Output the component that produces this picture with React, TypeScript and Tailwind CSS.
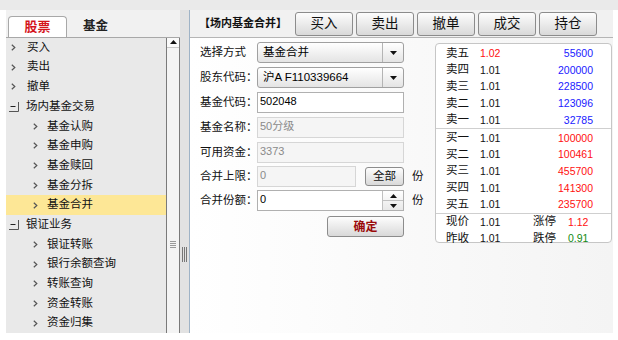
import React from 'react';

type Node = { label: string; kind: 'top' | 'group' | 'child'; active?: boolean };

const tree: Node[] = [
  { label: '买入', kind: 'top' },
  { label: '卖出', kind: 'top' },
  { label: '撤单', kind: 'top' },
  { label: '场内基金交易', kind: 'group' },
  { label: '基金认购', kind: 'child' },
  { label: '基金申购', kind: 'child' },
  { label: '基金赎回', kind: 'child' },
  { label: '基金分拆', kind: 'child' },
  { label: '基金合并', kind: 'child', active: true },
  { label: '银证业务', kind: 'group' },
  { label: '银证转账', kind: 'child' },
  { label: '银行余额查询', kind: 'child' },
  { label: '转账查询', kind: 'child' },
  { label: '资金转账', kind: 'child' },
  { label: '资金归集', kind: 'child' },
];

const sells = [
  { label: '卖五', price: '1.02', up: true, vol: '55600' },
  { label: '卖四', price: '1.01', vol: '200000' },
  { label: '卖三', price: '1.01', vol: '228500' },
  { label: '卖二', price: '1.01', vol: '123096' },
  { label: '卖一', price: '1.01', vol: '32785' },
];

const buys = [
  { label: '买一', price: '1.01', vol: '100000' },
  { label: '买二', price: '1.01', vol: '100461' },
  { label: '买三', price: '1.01', vol: '455700' },
  { label: '买四', price: '1.01', vol: '141300' },
  { label: '买五', price: '1.01', vol: '235700' },
];

const Chevron = () => (
  <svg width="5" height="7" viewBox="0 0 5 7" className="shrink-0">
    <path d="M0.8 0.8 L3.8 3.5 L0.8 6.2" fill="none" stroke="#555" strokeWidth="1.2" />
  </svg>
);

const MinusBox = () => (
  <svg width="10" height="10" viewBox="0 0 10 10" className="shrink-0">
    <path d="M9.5 0 V9.5 H0" fill="none" stroke="#555" strokeWidth="1" />
    <path d="M1.5 4.5 H6.5" stroke="#222" strokeWidth="1" />
  </svg>
);

const Down = () => (
  <svg width="7" height="4" viewBox="0 0 7 4">
    <path d="M0 0 H7 L3.5 4 Z" fill="#111" />
  </svg>
);

const Up = () => (
  <svg width="7" height="4" viewBox="0 0 7 4">
    <path d="M0 4 H7 L3.5 0 Z" fill="#111" />
  </svg>
);

const Label = ({ children }: { children: React.ReactNode }) => (
  <div className="w-[57px] shrink-0 whitespace-nowrap text-[11.5px] leading-none text-[#111]">{children}</div>
);

const Select = ({ value }: { value: string }) => (
  <div className="flex h-[21px] w-[147px] shrink-0 rounded-[3px] border border-[#a0a0a0] bg-linear-to-b from-white to-[#e4e4e4]">
    <div className="flex flex-1 items-center pl-[5px] text-[11.5px] text-black">{value}</div>
    <div className="flex w-[21px] items-center justify-center border-l border-[#b4b4b4]">
      <Down />
    </div>
  </div>
);

const Field = ({ value, disabled, w = 'w-[147px]' }: { value: string; disabled?: boolean; w?: string }) => (
  <div
    className={`${w} h-[21px] shrink-0 border pl-[2px] pt-[3px] text-[11px] leading-none ${
      disabled ? 'border-[#d6d6d6] bg-[#f5f5f5] text-[#8a8a8a]' : 'border-[#b0b0b0] bg-white text-black'
    }`}
  >
    {value}
  </div>
);

const Btn = ({ children, className = '' }: { children: React.ReactNode; className?: string }) => (
  <div
    className={`flex shrink-0 items-center justify-center rounded-[3px] border border-[#8c8c8c] bg-linear-to-b from-[#fdfdfd] to-[#d9d9d9] ${className}`}
  >
    {children}
  </div>
);

const BookRow = ({ label, price, vol, priceCls, volCls }: { label: string; price: string; vol: string; priceCls: string; volCls: string }) => (
  <div className="flex h-[16.7px] items-center">
    <div className="w-[34px] text-[11.5px] text-[#111]">{label}</div>
    <div className={`w-[40px] text-[10.5px] ${priceCls}`}>{price}</div>
    <div className={`flex-1 text-right text-[10.5px] ${volCls}`}>{vol}</div>
  </div>
);

export default function App() {
  return (
    <div className="h-[340px] w-[618px] overflow-hidden bg-white font-['Liberation_Sans','Noto_Sans_CJK_SC',sans-serif] leading-none">
      <div className="h-[10px] bg-[#eaeaea]" />
      <div className="flex h-[323px] pl-[6px] pr-[5px]">
        {/* left navigation */}
        <div className="flex w-[174px] shrink-0 flex-col">
          <div className="flex h-[28px] items-end border-b border-[#a8a8a8] bg-[#f1f1f1] pl-[2px]">
            <div className="flex h-[21px] w-[59px] items-center justify-center rounded-t-[4px] border border-b-0 border-[#a8a8a8] bg-white text-[13px] font-bold text-[#d4141c]">
              股票
            </div>
            <div className="flex h-[21px] w-[57px] items-center justify-center text-[12.5px] font-bold text-[#222]">
              基金
            </div>
          </div>
          <div className="flex flex-1">
            <div className="w-[160px] shrink-0 bg-[#e9e9e9]">
              {tree.map((n) => (
                <div
                  key={n.label}
                  className={`flex h-[19.7px] items-center whitespace-nowrap text-[11.5px] text-[#111] ${n.active ? 'bg-[#fde796]' : ''} ${
                    n.kind === 'child' ? 'pl-[27px]' : n.kind === 'top' ? 'pl-[5px]' : 'pl-[3px]'
                  }`}
                >
                  {n.kind === 'group' ? <MinusBox /> : <Chevron />}
                  <span className={n.kind === 'child' ? 'ml-[9px]' : n.kind === 'top' ? 'ml-[11px]' : 'ml-[7px]'}>{n.label}</span>
                </div>
              ))}
            </div>
            <div className="flex w-[14px] shrink-0 flex-col border-l border-r border-[#7a7a7a] bg-[#f4f4f4]">
              <div className="flex h-[10px] items-center justify-center border-b border-[#c8c8c8] bg-[#fafafa]">
                <Up />
              </div>
              <div className="flex flex-1 items-center justify-center">
                <div className="flex flex-col gap-[1px] pt-[109px]">
                  <div className="h-[1px] w-[6px] bg-[#9a9a9a]" />
                  <div className="h-[1px] w-[6px] bg-[#9a9a9a]" />
                  <div className="h-[1px] w-[6px] bg-[#9a9a9a]" />
                  <div className="h-[1px] w-[6px] bg-[#9a9a9a]" />
                </div>
              </div>
            </div>
          </div>
        </div>

        {/* splitter */}
        <div className="flex w-[9px] shrink-0 items-center justify-center bg-[#e2e2e2]">
          <div className="flex gap-[1px] pt-[166px]">
            <div className="h-[15px] w-[1px] bg-[#777]" />
            <div className="h-[15px] w-[1px] bg-[#777]" />
            <div className="h-[15px] w-[1px] bg-[#777]" />
          </div>
        </div>

        {/* right content */}
        <div className="flex min-w-0 flex-1 flex-col border-l border-[#9fb3c6]">
          <div className="flex h-[28px] items-center border-b border-[#b5b5b5] bg-[#f1f1f1] pl-[9px]">
            <div className="w-[96px] shrink-0 whitespace-nowrap text-[11px] font-bold text-[#111]">【场内基金合并】</div>
            <div className="flex gap-[3px]">
              {['买入', '卖出', '撤单', '成交', '持仓'].map((b) => (
                <Btn key={b} className="h-[24px] w-[58px] text-[13.5px] text-[#111]">
                  {b}
                </Btn>
              ))}
            </div>
          </div>
          <div className="flex flex-1 bg-linear-to-r from-white to-[#f4f4f4] pl-[10px] pt-[4px]">
            <div className="flex w-[224px] shrink-0 flex-col">
              <div className="flex items-center">
                <Label>选择方式</Label>
                <Select value="基金合并" />
              </div>
              <div className="mt-[4px] flex items-center">
                <Label>股东代码：</Label>
                <Select value="沪A F110339664" />
              </div>
              <div className="mt-[4px] flex items-center">
                <Label>基金代码：</Label>
                <Field value="502048" />
              </div>
              <div className="mt-[4px] flex items-center">
                <Label>基金名称：</Label>
                <Field value="50分级" disabled />
              </div>
              <div className="mt-[4px] flex items-center">
                <Label>可用资金：</Label>
                <Field value="3373" disabled />
              </div>
              <div className="mt-[3px] flex items-center">
                <Label>合并上限：</Label>
                <Field value="0" disabled w="w-[99px]" />
                <Btn className="ml-[9px] h-[19px] w-[39px] text-[11.5px] text-[#111]">全部</Btn>
                <span className="ml-[8px] text-[11.5px] text-[#111]">份</span>
              </div>
              <div className="mt-[3px] flex items-center">
                <Label>合并份额：</Label>
                <div className="flex h-[21px] w-[147px] shrink-0 border border-[#b0b0b0] bg-white">
                  <div className="flex-1 pl-[2px] pt-[3px] text-[11px] text-black">0</div>
                  <div className="flex w-[21px] flex-col border-l border-[#c0c0c0] bg-linear-to-b from-white to-[#e8e8e8]">
                    <div className="flex flex-1 items-center justify-center border-b border-[#c0c0c0]">
                      <Up />
                    </div>
                    <div className="flex flex-1 items-center justify-center">
                      <Down />
                    </div>
                  </div>
                </div>
                <span className="ml-[8px] text-[11.5px] text-[#111]">份</span>
              </div>
              <div className="mt-[5px] flex pl-[127px]">
                <Btn className="h-[21px] w-[77px] text-[12px] font-bold text-[#9a0a0a]">确定</Btn>
              </div>
            </div>

            <div className="ml-[11px] mt-[1px] h-[200px] w-[177px] shrink-0 rounded-[4px] border border-[#c6c6c6] bg-white pl-[10px] pr-[18px]">
              <div className="pt-[1px]">
                {sells.map((s) => (
                  <BookRow
                    key={s.label}
                    label={s.label}
                    price={s.price}
                    vol={s.vol}
                    priceCls={s.up ? 'text-[#ff1010]' : 'text-[#111]'}
                    volCls="text-[#1a1aff]"
                  />
                ))}
              </div>
              <div className="-ml-[10px] -mr-[18px] border-t border-[#cfcfcf]" />
              {buys.map((s) => (
                <BookRow key={s.label} label={s.label} price={s.price} vol={s.vol} priceCls="text-[#111]" volCls="text-[#ff1010]" />
              ))}
              <div className="-ml-[10px] -mr-[18px] border-t border-[#cfcfcf]" />
              <div className="flex h-[16.5px] items-center">
                <div className="w-[34px] text-[11.5px] text-[#111]">现价</div>
                <div className="w-[53px] text-[10.5px] text-[#111]">1.01</div>
                <div className="w-[35px] text-[11.5px] text-[#111]">涨停</div>
                <div className="text-[10.5px] text-[#ff1010]">1.12</div>
              </div>
              <div className="flex h-[16.5px] items-center">
                <div className="w-[34px] text-[11.5px] text-[#111]">昨收</div>
                <div className="w-[53px] text-[10.5px] text-[#111]">1.01</div>
                <div className="w-[35px] text-[11.5px] text-[#111]">跌停</div>
                <div className="text-[10.5px] text-[#128a12]">0.91</div>
              </div>
            </div>
          </div>
        </div>
      </div>
    </div>
  );
}
